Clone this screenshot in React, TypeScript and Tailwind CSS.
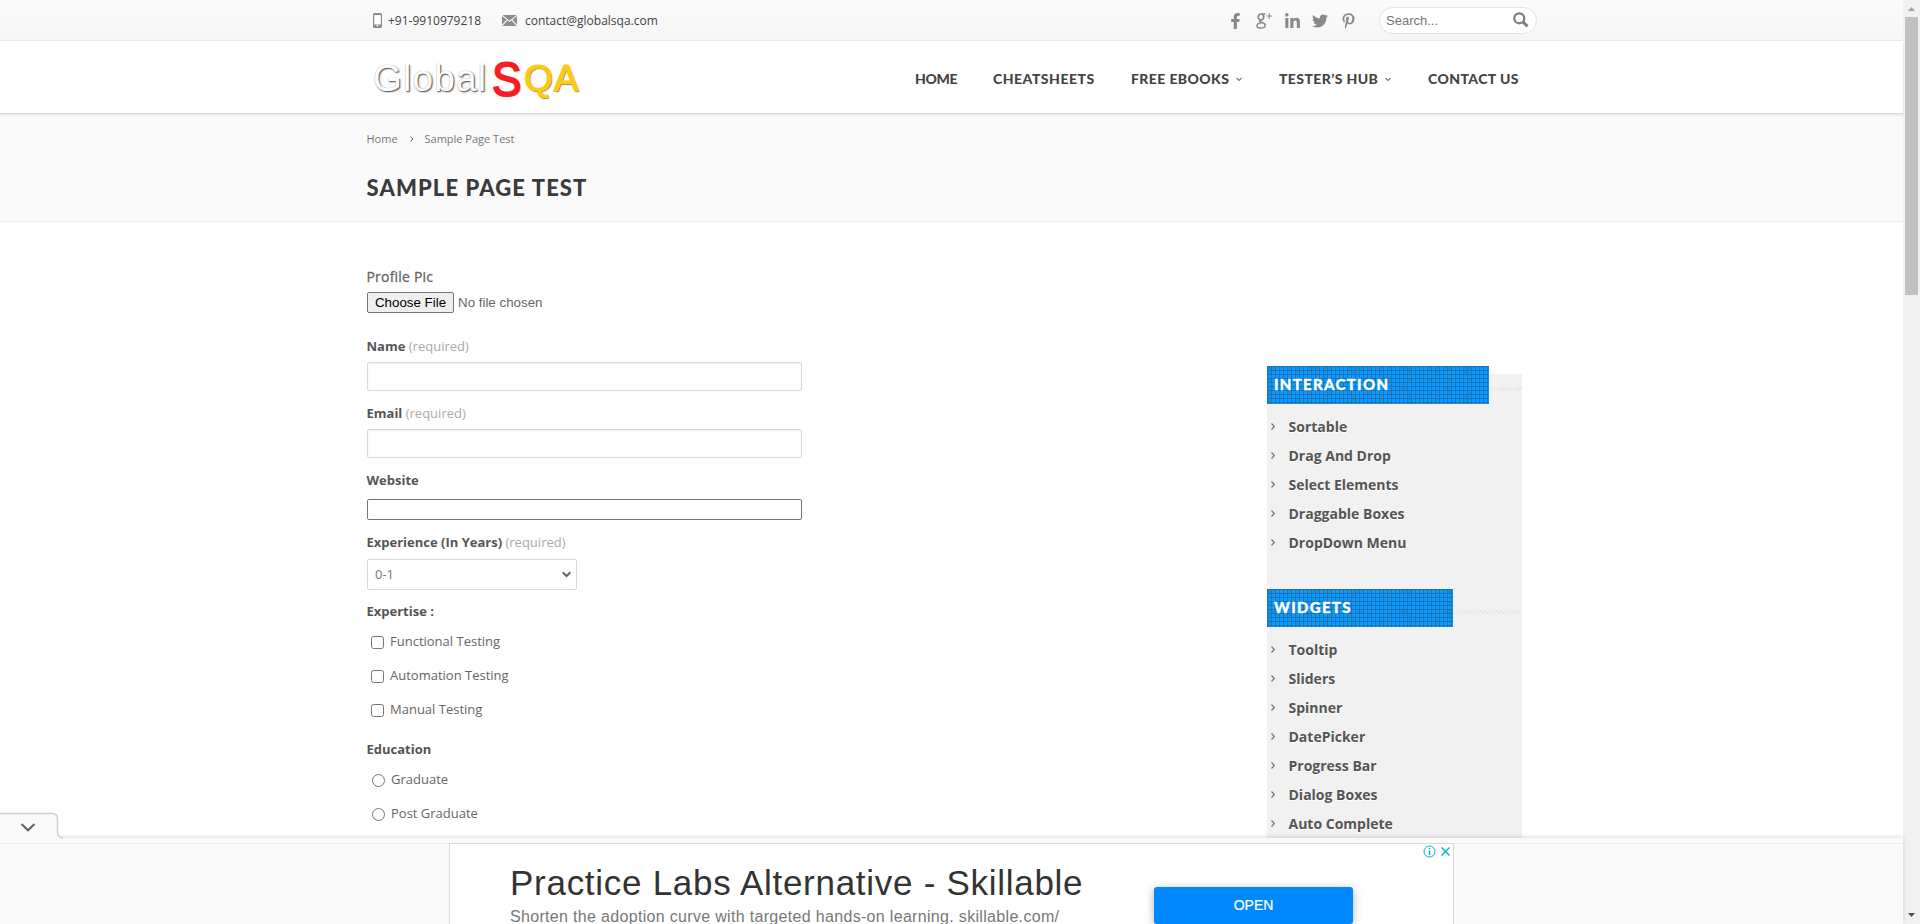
import { FaFacebookF, FaLinkedinIn, FaTwitter, FaPinterestP } from "react-icons/fa";

const interaction = ["Sortable", "Drag And Drop", "Select Elements", "Draggable Boxes", "DropDown Menu"];
const widgets = ["Tooltip", "Sliders", "Spinner", "DatePicker", "Progress Bar", "Dialog Boxes", "Auto Complete"];

function TopBar() {
  return (
    <div className="flex h-[41px] shrink-0 items-center border-b border-[#ebebeb] bg-linear-to-b from-[#fbfbfb] to-[#f6f6f6] pl-[373px] text-[12px] text-[#444444]">
      <svg className="h-[15px] w-[9px]" viewBox="0 0 9 15">
        <rect width="9" height="15" rx="1.5" fill="#8c8c8c" />
        <rect x="1.2" y="2" width="6.6" height="9.5" fill="#fff" />
        <path d="M3 12.3h3L4.5 13.8z" fill="#fff" />
      </svg>
      <span className="ml-[6px] w-[94px] pt-[2px] whitespace-nowrap">+91-9910979218</span>
      <svg className="ml-[20px] h-[11px] w-[15px]" viewBox="0 0 15 11">
        <rect width="15" height="11" fill="#8c8c8c" />
        <path d="M0 .4l7.5 6L15 .4M0 10.6l5-5.4M15 10.6l-5-5.4" fill="none" stroke="#fafafa" strokeWidth="1.1" />
      </svg>
      <span className="ml-[8px] w-[705px] pt-[2px] whitespace-nowrap">contact@globalsqa.com</span>
      <div className="flex h-4 items-center pt-[2px] text-[#898989]">
        <FaFacebookF className="h-4 w-[11px]" />
        <svg className="ml-[15px] h-[16px] w-[16px]" viewBox="0 0 16 16" fill="none" stroke="#898989">
          <ellipse cx="5" cy="4" rx="2.7" ry="3" strokeWidth="1.7" />
          <path d="M5.500 1H9.500M5.500 7C2.500 8 4 9 6 9.500C8.500 10.200 9.400 11 9.200 12.500C9 14.300 7 15.100 4.800 15.100C2.500 15.100 1 14.300 1 12.700C1 11 3 10.200 5.500 9.800" strokeWidth="1.500" />
          <path d="M10.500 3H16M13.250 .2V5.800" strokeWidth="1.100" />
        </svg>
        <FaLinkedinIn className="ml-[12px] h-[17px] w-[17px]" />
        <FaTwitter className="ml-[11px] h-4 w-4" />
        <FaPinterestP className="ml-[14px] h-4 w-[13px]" />
      </div>
      <div className="ml-[24px] flex h-[27px] w-[158px] shrink-0 items-center justify-between rounded-full border border-[#e3e3e3] bg-white pr-[7px] pl-[6px] font-['Liberation_Sans'] text-[13px] text-[#757575]">
        <span className="pt-px">Search...</span>
        <svg className="h-4 w-4" viewBox="0 0 16 16" fill="none" stroke="#7b7b7b">
          <circle cx="6.3" cy="6.3" r="5" strokeWidth="2.2" />
          <path d="M10 10l4.500 4.300" strokeWidth="3" />
        </svg>
      </div>
    </div>
  );
}

function Caret() {
  return (
    <svg className="h-[5px] w-[6px]" viewBox="0 0 6 5" fill="none" stroke="#777777" strokeWidth="1.100">
      <path d="M.5 1L3 3.500L5.500 1" />
    </svg>
  );
}

function Logo() {
  return (
    <div className="flex h-[54px] w-[220px] items-baseline font-['Liberation_Sans'] text-[37px] leading-[56px]">
      <span className="w-[120px] pl-px tracking-[1.2px] text-[#fdfdfd] [text-shadow:1px_1px_1px_#666,1px_1px_2px_#999,0_0_1px_#bbb]">Global</span>
      <span className="w-[32px] text-[49px] leading-none text-[#fb1c23] [-webkit-text-stroke:1.8px_#fb1c23] [text-shadow:1px_1px_1px_#777]">
        <span className="relative top-[5px] inline-block origin-left scale-x-90">S</span>
      </span>
      <span className="tracking-[0.9px] text-[#fccb10] [-webkit-text-stroke:1.2px_#fccb10] [text-shadow:1px_1px_1px_#555]">QA</span>
    </div>
  );
}

function Header() {
  return (
    <header className="z-10 flex h-[73px] shrink-0 items-center border-b border-[#d9dada] bg-white pl-[372px] shadow-[0_1px_2px_rgba(0,0,0,0.1)]">
      <Logo />
      <nav className="ml-[323px] flex items-center pt-[3px] font-['Lato'] text-[14px] font-black tracking-[0.4px] text-[#444444]">
        <span className="w-[78px] tracking-[-0.3px]">HOME</span>
        <span className="w-[138px] tracking-[0.5px]">CHEATSHEETS</span>
        <span className="w-[105px]">FREE EBOOKS</span>
        <span className="flex w-[43px] pt-px"><Caret /></span>
        <span className="w-[106px]">TESTER’S HUB</span>
        <span className="flex w-[43px] pt-px"><Caret /></span>
        <span className="whitespace-nowrap">CONTACT US</span>
      </nav>
    </header>
  );
}

function TitleBar() {
  return (
    <section className="h-[108px] shrink-0 border-b border-[#ececec] bg-[#fafafa] pl-[366.5px]">
      <div className="mt-[15px] flex h-5 items-center text-[11px] text-[#777777]">
        <span className="w-[43px]">Home</span>
        <svg className="mr-[11px] h-[6px] w-[4px]" viewBox="0 0 4 6" fill="none" stroke="#666">
          <path d="M.5 .5L3 3L.5 5.500" />
        </svg>
        <span>Sample Page Test</span>
      </div>
      <h1 className="mt-[25px] font-['Lato'] text-[22px] leading-[28px] font-black tracking-[1.1px] text-[#3b3b3b]">SAMPLE PAGE TEST</h1>
    </section>
  );
}

function FieldLabel({ text, required }: { text: string; required?: boolean }) {
  return (
    <div className="-ml-[0.5px] h-5 font-bold leading-5 text-[#555555]">
      {text}
      {required && <span className="font-normal text-[#aaaaaa]"> (required)</span>}
    </div>
  );
}

function Form() {
  return (
    <form className="w-[900px] pt-[45px] text-[13px] leading-5 text-[#666666]">
      <div className="-ml-[0.5px] h-5 text-[14px] tracking-[0.2px] [-webkit-text-stroke:0.3px_#666]">Profile Pic</div>
      <div className="mt-[5px] flex h-[21px] items-center font-['Liberation_Sans'] text-[13.33px]">
        <span className="mr-1 flex h-[21px] w-[87px] items-center justify-center rounded-[2px] border border-[#767676] bg-[#efefef] text-black">Choose File</span>
        No file chosen
      </div>
      <div className="mt-[23px]"><FieldLabel text="Name" required /></div>
      <input className="mt-[6px] block h-[29px] w-[435px] rounded-[2px] border border-[#d9d9d9] shadow-[inset_0_1px_2px_rgba(0,0,0,0.07)]" />
      <div className="mt-3"><FieldLabel text="Email" required /></div>
      <input className="mt-[6px] block h-[29px] w-[435px] rounded-[2px] border border-[#d9d9d9] shadow-[inset_0_1px_2px_rgba(0,0,0,0.07)]" />
      <div className="mt-3"><FieldLabel text="Website" /></div>
      <input className="mt-[9px] block h-[21px] w-[435px] rounded-[2px] border border-[#767676]" />
      <div className="mt-3"><FieldLabel text="Experience (In Years)" required /></div>
      <div className="mt-[7px] flex h-[31px] w-[210px] items-center justify-between rounded-[2px] border border-[#d9d9d9] pr-[5px] pl-[7px] text-[#777777]">
        <span className="pb-px">0-1</span>
        <svg className="h-[7px] w-[9px]" viewBox="0 0 9 7" fill="none" stroke="#666" strokeWidth="2">
          <path d="M.7 1.200L4.500 5L8.300 1.200" />
        </svg>
      </div>
      <div className="mt-[11px]"><FieldLabel text="Expertise :" /></div>
      <div className="mt-[10px] flex flex-col gap-[14px] pl-1">
        {["Functional Testing", "Automation Testing", "Manual Testing"].map((t) => (
          <label key={t} className="flex h-5 gap-[6px]">
            <span className="mt-[5px] h-[13px] w-[13px] rounded-[2.5px] border border-[#767676] bg-white" />
            {t}
          </label>
        ))}
      </div>
      <div className="mt-5"><FieldLabel text="Education" /></div>
      <div className="mt-[10px] flex flex-col gap-[14px] pl-[5px]">
        {["Graduate", "Post Graduate"].map((t) => (
          <label key={t} className="flex h-5 gap-[6px]">
            <span className="mt-[5px] h-[13px] w-[13px] rounded-full border border-[#767676] bg-white" />
            {t}
          </label>
        ))}
      </div>
    </form>
  );
}

function Banner({ text, wide }: { text: string; wide?: boolean }) {
  return (
    <div className="flex h-[38px] items-center">
      <div className={`${wide ? "w-[222px]" : "w-[186px]"} flex h-[38px] items-center bg-[#0d99ff] bg-[linear-gradient(#1474b6_1px,transparent_1px),linear-gradient(90deg,#1478be_1px,transparent_1px),conic-gradient(from_270deg_at_4px_4px,#2a80bd90_90deg,transparent_0),conic-gradient(from_270deg_at_8px_4px,#2a80bd80_90deg,transparent_0),conic-gradient(from_270deg_at_4px_8px,#2a80bd60_90deg,transparent_0)] bg-size-[4px_4px,4px_4px,20px_12px,44px_20px,28px_28px] pb-[2px] pl-[7px] font-['Lato'] text-[15px] font-black tracking-[1.3px] text-white [-webkit-text-stroke:0.3px_white]`}>
        {text}
      </div>
      <div className="mt-2 h-1 flex-1 bg-[repeating-linear-gradient(45deg,#e4e4e4_0_1px,#f1f1f1_1px_3px)]" />
    </div>
  );
}

function LinkList({ items }: { items: string[] }) {
  return (
    <ul className="pt-2 pl-1 text-[14px] font-bold text-[#555555] [text-shadow:0_1px_0_#fff]">
      {items.map((t) => (
        <li key={t} className="flex h-[29px] leading-[29px]">
          <svg className="mt-[11px] mr-[13.5px] h-[7px] w-[4px]" viewBox="0 0 4 7" fill="none" stroke="#777" strokeWidth="1.200">
            <path d="M.5 .5L3.300 3.500L.5 6.500" />
          </svg>
          {t}
        </li>
      ))}
    </ul>
  );
}

function Sidebar() {
  return (
    <aside className="mt-[152px] w-[255px] bg-[#f1f1f1]">
      <div className="-mt-2"><Banner text="INTERACTION" wide /></div>
      <LinkList items={interaction} />
      <div className="mt-8"><Banner text="WIDGETS" /></div>
      <LinkList items={widgets} />
    </aside>
  );
}

function AdBar() {
  return (
    <div className="relative flex h-[86px] shrink-0 flex-col bg-[#fafafa] shadow-[0_-1px_4px_rgba(0,0,0,0.15)]">
      <svg className="absolute -top-[26px] left-0 h-[28px] w-[68px]" viewBox="0 0 68 28">
        <path d="M0 1.500H52Q57.500 1.500 57.500 7V20Q57.500 25.500 63 26V28H0Z" fill="#fafafa" stroke="none" />
        <path d="M0 1.500H52Q57.500 1.500 57.500 7V20Q57.500 25.500 63 26" fill="none" stroke="#cfcfcf" strokeWidth="1.500" />
        <path d="M21.500 12L28 18.300L34.500 12" fill="none" stroke="#616161" strokeWidth="2" />
      </svg>
      <div className="h-[6px] border-b border-[#ececec]" />
      <div className="-mt-px ml-[449px] flex h-[81px] w-[1005px] overflow-hidden border border-b-0 border-[#dadada] bg-white font-['Liberation_Sans']">
        <div className="w-[704px] pt-[19px] pl-[60px]">
          <div className="text-[35px] leading-[40px] tracking-[0.72px] whitespace-nowrap text-[#333333]">Practice Labs Alternative - Skillable</div>
          <div className="mt-1 text-[16px] leading-5 tracking-[0.32px] whitespace-nowrap text-[#777777]">Shorten the adoption curve with targeted hands-on learning. skillable.com/</div>
        </div>
        <div className="mt-[43px] flex h-[37px] w-[199px] items-center justify-center rounded-[3px] bg-[#0088ff] text-[14px] text-white shadow-[0_2px_10px_rgba(0,0,0,0.3)] [-webkit-text-stroke:0.2px_white]">OPEN</div>
        <svg className="mt-[1px] ml-[70px] h-[13px] w-[28px]" viewBox="0 0 28 13" fill="none" stroke="#00aecd">
          <circle cx="6.500" cy="6.500" r="5.500" />
          <path d="M6.500 5.500V10M6.500 3V4.300" strokeWidth="1.500" />
          <path d="M18.500 2.500L26.500 10.500M26.500 2.500L18.500 10.500" strokeWidth="1.300" />
        </svg>
      </div>
    </div>
  );
}

export default function App() {
  return (
    <div className="flex h-[924px] w-[1920px] overflow-hidden bg-white font-['Open_Sans',sans-serif]">
      <div className="flex w-[1903px] flex-col">
        <TopBar />
        <Header />
        <TitleBar />
        <main className="flex h-[616px] shrink-0 overflow-hidden pl-[367px]">
          <Form />
          <Sidebar />
        </main>
        <AdBar />
      </div>
      <div className="flex w-[17px] flex-col items-center bg-[#f1f1f1]">
        <svg className="mt-[7px] h-[4px] w-[7px]" viewBox="0 0 7 4"><path d="M0 4L3.500 0L7 4Z" fill="#a3a3a3" /></svg>
        <div className="mt-[6px] h-[278px] w-[13px] bg-[#c1c1c1]" />
        <svg className="mt-auto mb-[7px] h-[4px] w-[7px]" viewBox="0 0 7 4"><path d="M0 0H7L3.500 4Z" fill="#505050" /></svg>
      </div>
    </div>
  );
}
